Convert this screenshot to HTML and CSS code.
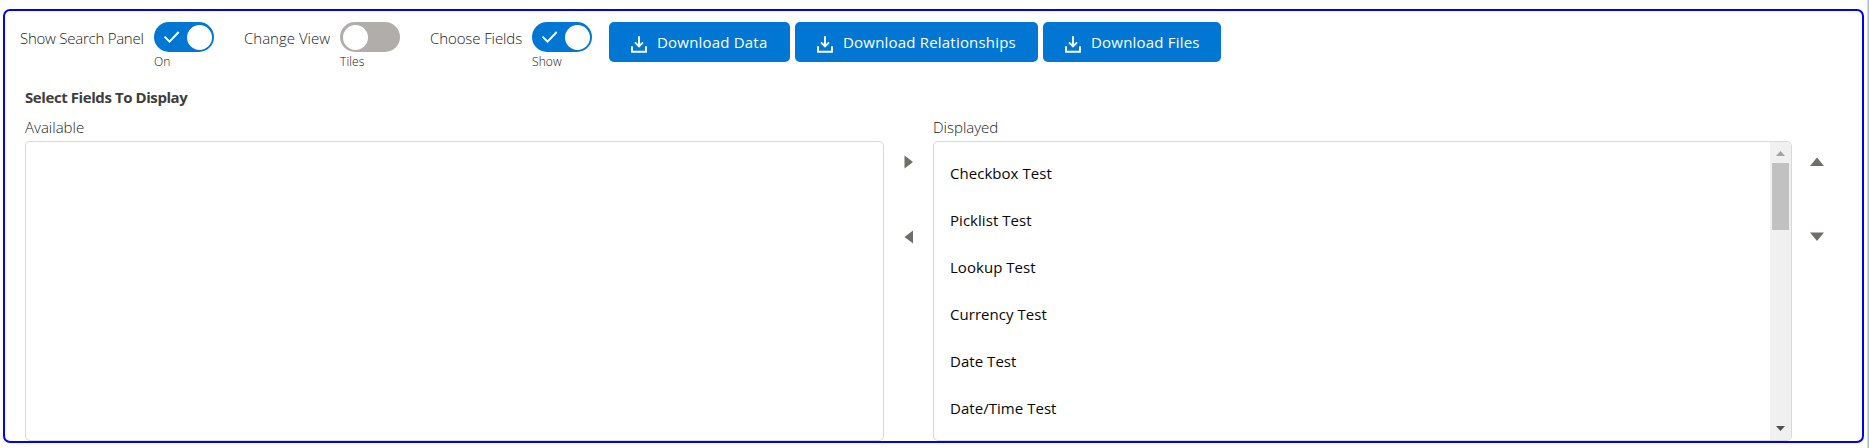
FILE: index.html
```html
<!DOCTYPE html>
<html lang="en">
<head>
<meta charset="utf-8">
<title>Select Fields To Display</title>
<link rel="stylesheet" href="styles.css">
</head>
<body>
<svg class="defs" width="0" height="0">
  <symbol id="download" viewBox="0 0 16 17">
    <path d="M8 0.3V10M4 6.4L8 10.4L12 6.4M1 10.2V15.8H15V10.2" fill="none" stroke="currentColor" stroke-width="1.9"/>
  </symbol>
  <symbol id="check" viewBox="0 0 16 12">
    <path d="M1 5.6L6 10.6L15.2 1" fill="none" stroke="currentColor" stroke-width="2"/>
  </symbol>
</svg>
<main class="panel">
  <div class="toolbar">
    <div class="option option-search">
      <span class="option-label">Show Search Panel</span>
      <div class="switch"><div class="track on"><svg class="check"><use href="#check"/></svg><i class="knob"></i></div><span class="state">On</span></div>
    </div>
    <div class="option option-view">
      <span class="option-label">Change View</span>
      <div class="switch"><div class="track"><i class="knob"></i></div><span class="state">Tiles</span></div>
    </div>
    <div class="option option-fields">
      <span class="option-label">Choose Fields</span>
      <div class="switch"><div class="track on"><svg class="check"><use href="#check"/></svg><i class="knob"></i></div><span class="state">Show</span></div>
    </div>
    <div class="buttons">
      <button class="btn btn-data"><svg><use href="#download"/></svg><span>Download Data</span></button>
      <button class="btn btn-rel"><svg><use href="#download"/></svg><span>Download Relationships</span></button>
      <button class="btn btn-files"><svg><use href="#download"/></svg><span>Download Files</span></button>
    </div>
  </div>
  <h2 class="title">Select Fields To Display</h2>
  <div class="dual">
    <section class="column">
      <div class="column-label">Available</div>
      <ul class="list"></ul>
    </section>
    <div class="arrows move">
      <svg width="10" height="14" viewBox="0 0 10 14"><path d="M0.5 0.5L9 7L0.5 13.5Z"/></svg>
      <svg width="10" height="14" viewBox="0 0 10 14"><path d="M9 0.5L0.5 7L9 13.5Z"/></svg>
    </div>
    <section class="column">
      <div class="column-label">Displayed</div>
      <div class="list">
        <ul class="items">
          <li>Checkbox Test</li>
          <li>Picklist Test</li>
          <li>Lookup Test</li>
          <li>Currency Test</li>
          <li>Date Test</li>
          <li>Date/Time Test</li>
        </ul>
        <div class="scrollbar">
          <svg width="9" height="5" viewBox="0 0 9 5"><path d="M0 5L4.5 0L9 5Z" fill="#a3a3a3"/></svg>
          <div class="thumb"></div>
          <svg class="scroll-down" width="9" height="5" viewBox="0 0 9 5"><path d="M0 0L4.5 5L9 0Z" fill="#505050"/></svg>
        </div>
      </div>
    </section>
    <div class="arrows order">
      <svg width="14" height="10" viewBox="0 0 14 10"><path d="M0 9L7 0.5L14 9Z"/></svg>
      <svg width="14" height="10" viewBox="0 0 14 10"><path d="M0 0.5L7 9L14 0.5Z"/></svg>
    </div>
  </div>
</main>
<div class="edge"></div>
</body>
</html>
```

FILE: styles.css
```css
* { box-sizing: border-box; }
body {
  margin: 0;
  height: 448px;
  display: flex;
  padding: 9px 0 0 3px;
  background: #fff;
  color: #222;
  font-family: "Open Sans", "Noto Sans", sans-serif;
  font-size: 15px;
  overflow: hidden;
}
ul { list-style: none; margin: 0; padding: 0; }
.defs { position: absolute; }
.panel {
  width: 1861px;
  height: 434px;
  flex: none;
  border: 2px solid #00f;
  border-radius: 7px;
  padding: 11px 0 0 15px;
}
.edge {
  width: 2px;
  height: 448px;
  margin: -9px 0 0 3px;
  background: linear-gradient(90deg, #d8d8d8 50%, #a9c0de 50%);
}
.toolbar { display: flex; height: 60px; }
.option { display: flex; flex: none; }
.option-search { width: 223px; }
.option-view { width: 186px; }
.option-fields { width: 180px; }
.option-label { white-space: nowrap; font-weight: 300; line-height: 32px; }
.option-search .option-label { width: 134px; letter-spacing: -0.25px; }
.option-view .option-label { width: 97px; padding-left: 1px; }
.option-fields .option-label { width: 103px; padding-left: 1px; letter-spacing: -0.1px; }
.switch { width: 60px; }
.track {
  height: 30px;
  border-radius: 15px;
  background: #b0adab;
  display: flex;
  align-items: center;
  padding: 0 2px 0 3px;
}
.track.on { background: #0176d3; justify-content: space-between; padding-left: 9px; color: #fff; }
.check { width: 17px; height: 12px; }
.knob { width: 25px; height: 25px; border-radius: 50%; background: #fff; }
.state { display: block; font-size: 12px; line-height: 19px; font-weight: 300; color: #111; letter-spacing: 0.1px; }
.buttons { display: flex; gap: 5px; }
.btn {
  height: 40px;
  border: 0;
  border-radius: 5px;
  background: #0176d3;
  color: #fff;
  font: 15px/40px "Open Sans", "Noto Sans", sans-serif;
  letter-spacing: 0.2px;
  padding: 0 0 0 22px;
  display: flex;
  align-items: center;
  white-space: nowrap;
}
.btn svg { width: 16px; height: 17px; margin: 4px 10px 0 0; flex: none; }
.btn-data { width: 181px; }
.btn-rel { width: 243px; }
.btn-files { width: 178px; }
.title { margin: 3px 0 0 5px; font-size: 15px; line-height: 24px; font-weight: 700; letter-spacing: -0.42px; color: #3e3e3c; }
.dual { display: flex; margin-left: 5px; padding-top: 6px; }
.column { width: 859px; flex: none; }
.column-label { height: 26px; line-height: 24px; font-weight: 300; }
.list {
  height: 300px;
  border: 1px solid #d8d8d8;
  border-radius: 5px;
  overflow: hidden;
  display: flex;
}
.items { flex: 1; padding: 8px 0 0 16px; color: #080707; letter-spacing: 0.04px; }
.items li { height: 47px; line-height: 47px; }
.scrollbar {
  width: 21px;
  background: #f0f0f0;
  display: flex;
  flex-direction: column;
  align-items: center;
  padding: 9px 0;
}
.thumb { width: 17px; height: 67px; background: #c1c1c1; margin-top: 7px; }
.scroll-down { margin-top: auto; }
.arrows { display: flex; flex-direction: column; fill: #706e6b; }
.move { width: 49px; padding: 40px 0 0 20px; gap: 61px; }
.order { padding: 42px 0 0 18px; gap: 65px; }
```
